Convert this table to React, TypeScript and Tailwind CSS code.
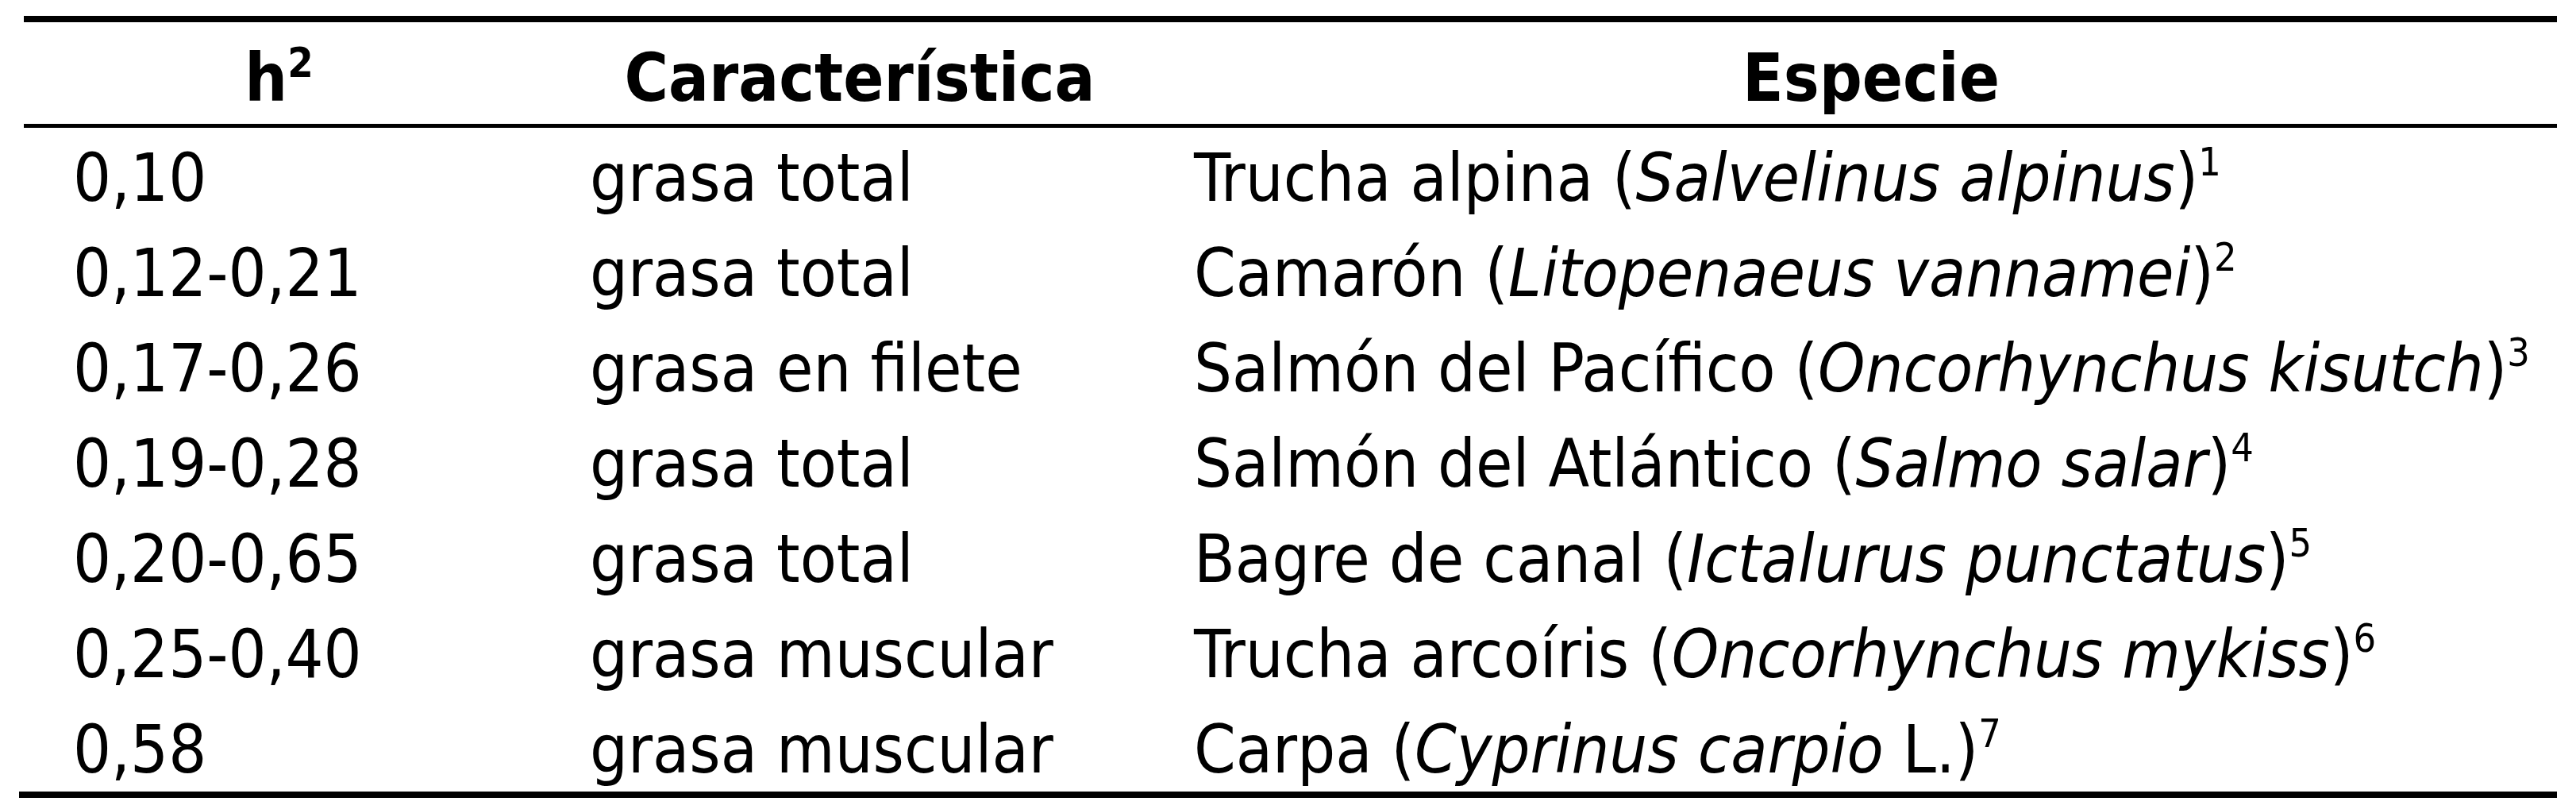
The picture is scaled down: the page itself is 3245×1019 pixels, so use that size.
const FONT = "font-['DejaVu_Sans_Condensed','DejaVu_Sans',sans-serif]"

type Row = {
  h2: string
  trait: string
  common: string
  latin: string
  tail?: string
  ref: string
}

const ROWS: Row[] = [
  { h2: "0,10", trait: "grasa total", common: "Trucha alpina", latin: "Salvelinus alpinus", ref: "1" },
  { h2: "0,12-0,21", trait: "grasa total", common: "Camarón", latin: "Litopenaeus vannamei", ref: "2" },
  { h2: "0,17-0,26", trait: "grasa en filete", common: "Salmón del Pacífico", latin: "Oncorhynchus kisutch", ref: "3" },
  { h2: "0,19-0,28", trait: "grasa total", common: "Salmón del Atlántico", latin: "Salmo salar", ref: "4" },
  { h2: "0,20-0,65", trait: "grasa total", common: "Bagre de canal", latin: "Ictalurus punctatus", ref: "5" },
  { h2: "0,25-0,40", trait: "grasa muscular", common: "Trucha arcoíris", latin: "Oncorhynchus mykiss", ref: "6" },
  { h2: "0,58", trait: "grasa muscular", common: "Carpa", latin: "Cyprinus carpio", tail: " L.", ref: "7" },
]

const COLS = "grid grid-cols-[643px_820px_1728px]"

function Sup({ children }: { children: string }) {
  return <span className="text-[50px] leading-none align-[32px]">{children}</span>
}

export default function App() {
  return (
    <div className={`min-h-[1019px] w-[3245px] bg-white pl-[30px] pt-[20px] text-black font-stretch-condensed ${FONT}`}>
      <div className="w-[3191px]">
        <div className="h-[8px] bg-black" />

        {/* header */}
        <div className={`${COLS} h-[128px] pt-[12px] text-[84px] font-bold leading-[116px]`}>
          <div className="text-center whitespace-nowrap">
            h<span className="text-[52px] leading-none align-[30px]">2</span>
          </div>
          <div className="text-center whitespace-nowrap">Característica</div>
          <div className="text-center whitespace-nowrap">Especie</div>
        </div>

        <div className="h-[5px] bg-black" />

        {ROWS.map((r, i) => (
          <div
            key={r.h2}
            className={`${COLS} pt-[6px] text-[84px] leading-[114px] ${i === ROWS.length - 1 ? "h-[116px]" : "h-[120px]"}`}
          >
            <div className="pl-[62px] whitespace-nowrap">{r.h2}</div>
            <div className="pl-[70px] whitespace-nowrap">{r.trait}</div>
            <div className="pl-[11px] whitespace-nowrap">
              {r.common} (<span className="italic">{r.latin}</span>
              {r.tail})<Sup>{r.ref}</Sup>
            </div>
          </div>
        ))}

        <div className="-ml-[6px] h-[8px] w-[3197px] bg-black" />
      </div>
    </div>
  )
}
